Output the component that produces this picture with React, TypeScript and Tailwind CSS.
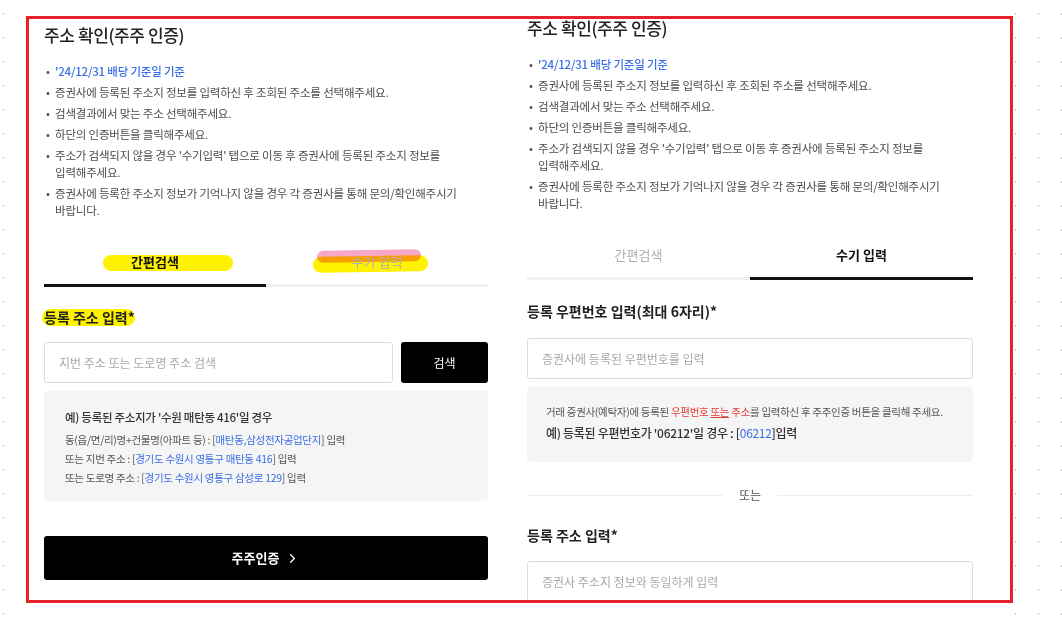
import { ChevronRight } from "lucide-react";
import type { ReactNode } from "react";

const blue = "text-[#3a6ee8]";

function Notice() {
  const items: ReactNode[] = [
    <span className={`${blue} font-medium`}>'24/12/31 배당 기준일 기준</span>,
    "증권사에 등록된 주소지 정보를 입력하신 후 조회된 주소를 선택해주세요.",
    "검색결과에서 맞는 주소 선택해주세요.",
    "하단의 인증버튼을 클릭해주세요.",
    "주소가 검색되지 않을 경우 '수기입력' 탭으로 이동 후 증권사에 등록된 주소지 정보를 입력해주세요.",
    "증권사에 등록한 주소지 정보가 기억나지 않을 경우 각 증권사를 통해 문의/확인해주시기 바랍니다.",
  ];
  return (
    <ul className="mt-[17px] flex flex-col gap-[4px] pr-[23px] text-[11.5px] leading-[17px] tracking-[-0.2px] text-[#4d4d4d] break-keep">
      {items.map((it, i) => (
        <li key={i} className="flex">
          <span className="w-[11px] shrink-0 pl-[2px] text-[#555]">•</span>
          <span>{it}</span>
        </li>
      ))}
    </ul>
  );
}

function Tabs({ active, marks }: { active: 0 | 1; marks?: boolean }) {
  const labels = ["간편검색", "수기 입력"];
  return (
    <div className="grid grid-cols-2">
      {labels.map((l, i) => (
        <div
          key={l}
          className={`relative flex h-[44px] items-center justify-center border-b-[3px] pb-[4px] text-[13px] ${
            active === i ? "border-[#111] font-bold text-[#111]" : "border-[#f0f0f0] text-[#b0b0b0]"
          }`}
        >
          {marks && i === 0 && (
            <span className="absolute left-[59px] top-[12px] h-[16px] w-[130px] rounded-full bg-[#fff200] mix-blend-multiply" />
          )}
          {marks && i === 1 && (
            <>
              <span className="absolute left-[47px] top-[13px] h-[16px] w-[115px] -rotate-1 rounded-full bg-[#fff200] mix-blend-multiply" />
              <span className="absolute left-[51px] top-[7px] h-[12px] w-[104px] -rotate-1 rounded-full bg-[#f7a7c8] mix-blend-multiply" />
            </>
          )}
          <span className="relative">{l}</span>
        </div>
      ))}
    </div>
  );
}

function Field({ placeholder }: { placeholder: string }) {
  return (
    <div className="flex h-[41px] flex-1 items-center rounded-[3px] border border-[#dcdcdc] bg-white px-[14px] text-[12px] text-[#a8a8a8]">
      {placeholder}
    </div>
  );
}

function Title() {
  return <h2 className="text-[17px] font-medium leading-[22px] tracking-[-0.4px] text-[#222]">주소 확인(주주 인증)</h2>;
}

function LeftPanel() {
  return (
    <div className="h-full w-[500px] bg-white">
      <div className="h-[600px] overflow-hidden pl-[36px] pr-[20px] pt-[24px]">
        <Title />
        <Notice />
        <div className="mt-[24px]">
          <Tabs active={0} marks />
        </div>
        <div className="relative mt-[21px] text-[14px] font-bold leading-[18px] text-[#222]">
          <span className="absolute left-[-2px] top-[1px] h-[17px] w-[93px] rounded-full bg-[#fff200] mix-blend-multiply" />
          <span className="relative">등록 주소 입력*</span>
        </div>
        <div className="mt-[16px] flex gap-[8px]">
          <Field placeholder="지번 주소 또는 도로명 주소 검색" />
          <button className="h-[41px] w-[87px] rounded-[3px] bg-black text-[12px] text-white">검색</button>
        </div>
        <div className="mt-[8px] rounded-[4px] bg-[#f5f5f5] px-[21px] pb-[14px] pt-[17px] text-[#555]">
          <p className="text-[11.5px] font-medium leading-[18px] tracking-[-0.3px] text-[#333]">예) 등록된 주소지가 '수원 매탄동 416'일 경우</p>
          <div className="mt-[4px] flex flex-col text-[10.5px] leading-[19px] tracking-[-0.3px]">
            <p>
              동(읍/면/리)명+건물명(아파트 등) : [<span className={blue}>매탄동,삼성전자공업단지</span>] 입력
            </p>
            <p>
              또는 지번 주소 : [<span className={blue}>경기도 수원시 영통구 매탄동 416</span>] 입력
            </p>
            <p>
              또는 도로명 주소 : [<span className={blue}>경기도 수원시 영통구 삼성로 129</span>] 입력
            </p>
          </div>
        </div>
        <button className="mt-[35px] flex h-[44px] w-full items-center justify-center gap-[6px] rounded-[3px] bg-black text-[13px] font-bold text-white">
          주주인증
          <ChevronRight size={15} strokeWidth={2} />
        </button>
      </div>
    </div>
  );
}

function RightPanel() {
  return (
    <div className="h-full w-[485px] bg-white">
      <div className="h-[600px] overflow-hidden pl-[19px] pr-[20px] pt-[17px]">
        <Title />
        <Notice />
        <div className="mt-[24px]">
          <Tabs active={1} />
        </div>
        <p className="mt-[22px] text-[14px] font-bold leading-[18px] text-[#222]">등록 우편번호 입력(최대 6자리)*</p>
        <div className="mt-[18px] flex">
          <Field placeholder="증권사에 등록된 우편번호를 입력" />
        </div>
        <div className="mt-[8px] rounded-[4px] bg-[#f5f5f5] px-[19px] pb-[20px] pt-[17px]">
          <p className="text-[10.5px] leading-[16px] tracking-[-0.3px] text-[#555]">
            거래 증권사(예탁자)에 등록된{" "}
            <span className="text-[#e53935]">
              우편번호 <span className="underline">또는</span> 주소
            </span>
            를 입력하신 후 주주인증 버튼을 클릭해 주세요.
          </p>
          <p className="mt-[4px] text-[12px] font-medium leading-[18px] tracking-[-0.3px] text-[#333]">
            예) 등록된 우편번호가 '06212'일 경우 : [<span className={`${blue} font-normal`}>06212</span>]입력
          </p>
        </div>
        <div className="mt-[24px] flex items-center gap-[16px] text-[12px] leading-[18px] text-[#555]">
          <div className="h-px flex-1 bg-[#eeeeee]" />
          <span>또는</span>
          <div className="h-px flex-1 bg-[#eeeeee]" />
        </div>
        <p className="mt-[22px] text-[14px] font-bold leading-[18px] text-[#222]">등록 주소 입력*</p>
        <div className="mt-[17px] flex">
          <Field placeholder="증권사 주소지 정보와 동일하게 입력" />
        </div>
      </div>
    </div>
  );
}

export default function App() {
  return (
    <div className="relative h-[618px] w-[1062px] overflow-hidden bg-white bg-[radial-gradient(#c4c4c4_0.8px,transparent_1px)] bg-[size:23px_24px] bg-[position:-8px_2px] font-['Noto_Sans_CJK_KR','Noto_Sans',sans-serif]">
      <div className="flex h-full pl-[8px]">
        <LeftPanel />
        <RightPanel />
      </div>
      <div className="pointer-events-none absolute left-[26px] top-[16px] h-[587px] w-[987px] border-[3px] border-[#e8202a]" />
    </div>
  );
}
